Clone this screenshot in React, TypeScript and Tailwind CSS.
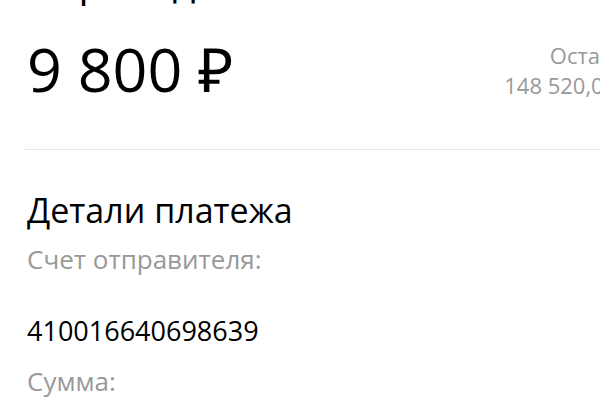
export default function App() {
  return (
    <div className="w-[600px] h-[400px] overflow-hidden bg-white font-['Open_Sans',sans-serif] text-black">
      <div className="ml-[27px] w-[608px]">
        <h1 className="mt-[-41px] text-[40px] leading-[44px] font-normal">Перевод</h1>

        <div className="mt-[30px] flex items-start justify-between">
          <div className="text-[61px] leading-[72px]">9 800 ₽</div>
          <div className="pt-[7px] text-right text-[22px] leading-[30px] text-[#999999]">
            <div>Остаток</div>
            <div>148 520,00 ₽</div>
          </div>
        </div>

        <div className="ml-[-2px] mt-[44px] border-t border-[#e5e5e5]" />

        <h2 className="mt-[42px] text-[34px] leading-[36px] font-normal">Детали платежа</h2>

        <div className="mt-[15px] text-[26px] leading-[32px] text-[#999999]">Счет отправителя:</div>
        <div className="mt-[40px] text-[27px] leading-[32px]">410016640698639</div>
        <div className="mt-[18px] text-[26px] leading-[32px] text-[#999999]">Сумма:</div>
      </div>
    </div>
  );
}
